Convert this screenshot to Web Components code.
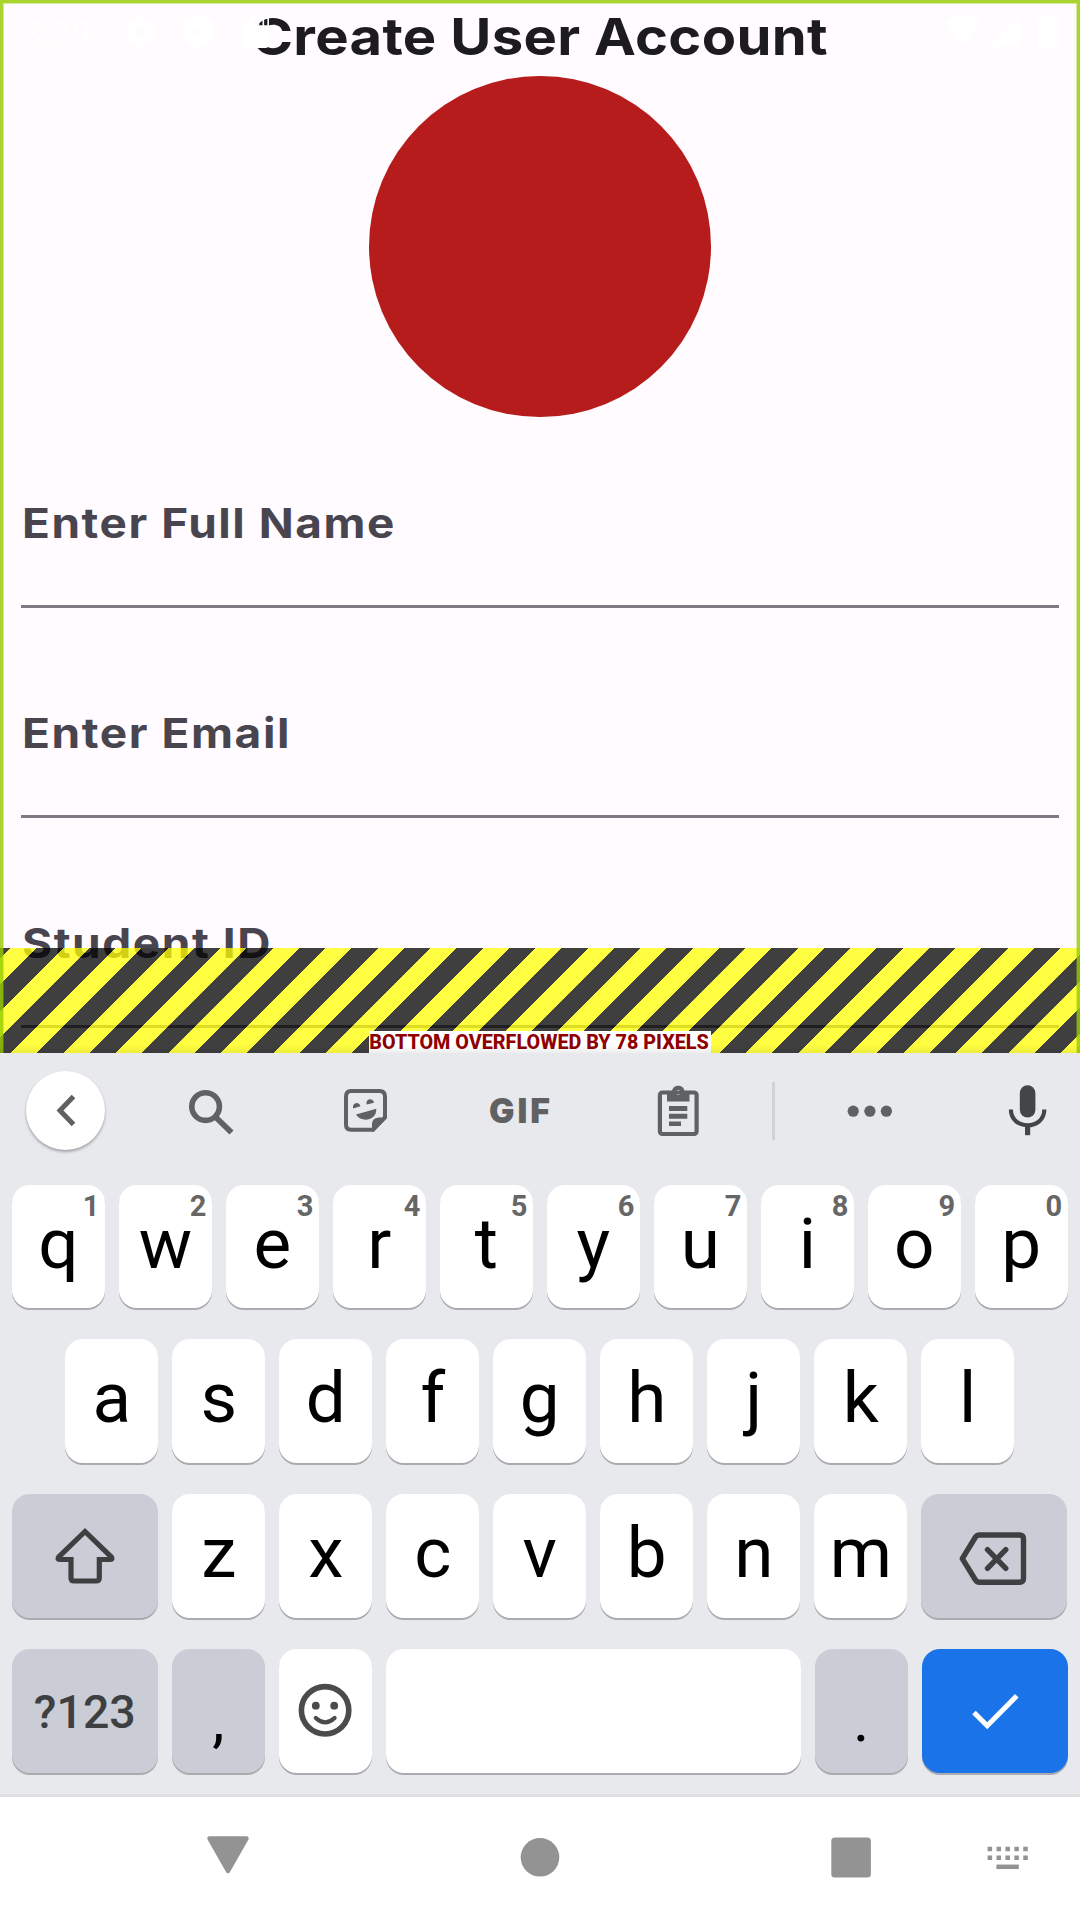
<!DOCTYPE html>
<html lang="en">
<head>
<meta charset="utf-8">
<title>Create User Account</title>
<style>
html,body{margin:0;padding:0}
body{width:1080px;height:1920px;overflow:hidden;background:#fff;font-family:Roboto,"Noto Sans",sans-serif}
</style>
</head>
<body>
<phone-screen>
  <account-form slot="app"></account-form>
  <soft-keyboard slot="keyboard"></soft-keyboard>
  <nav-bar slot="nav"></nav-bar>
</phone-screen>
<script>
function define(name, html) {
  customElements.define(name, class extends HTMLElement {
    connectedCallback() {
      if (this.shadowRoot) return;
      const root = this.attachShadow({mode: 'open'});
      root.innerHTML = typeof html === 'function' ? html(this) : html;
    }
  });
}

// Single line of text stretched to a given advance width.
define('fit-text', el => {
  const a = n => el.getAttribute(n);
  return `<style>:host{display:block}svg{display:block;overflow:visible;width:100%;height:100%}</style>
  <svg><text x="${a('x')}" y="${a('y')}" textLength="${a('length')}" lengthAdjust="spacingAndGlyphs" fill="currentColor">${a('text')}</text></svg>`;
});

define('status-bar', `<style>
:host{display:block;width:1080px;height:63px;color:#fff}svg{display:block}
text{font:400 36px Roboto,sans-serif}</style>
<svg width="1080" height="63" viewBox="0 0 1080 63" fill="#fff">
<text x="22" y="46">8:29</text>
<g transform="translate(121 12.5) scale(1.6)"><path fill-rule="evenodd" d="M19.1 12.9c0-.3.1-.6.1-.9s0-.6-.1-.9l2-1.6c.2-.1.2-.4.1-.6l-1.9-3.3c-.1-.2-.4-.3-.6-.2l-2.4 1c-.5-.4-1-.7-1.6-.9l-.4-2.6c0-.2-.2-.4-.5-.4h-3.8c-.2 0-.4.2-.5.4l-.3 2.6c-.6.2-1.100.6-1.600.9l-2.400-1c-.2-.1-.5 0-.6.2L2.700 8.900c-.1.2-.1.5.1.6l2 1.600c0 .3-.1.600-.1.900s0 .600.1.900l-2 1.600c-.2.1-.2.400-.1.600l1.900 3.300c.1.200.400.300.600.200l2.400-1c.500.400 1 .700 1.600.900l.400 2.600c0 .200.200.400.500.400h3.800c.200 0 .400-.200.500-.400l.300-2.600c.600-.200 1.100-.600 1.600-.900l2.400 1c.200.100.500 0 .600-.200l1.900-3.300c.100-.200.100-.500-.100-.600zM12 15.600a3.600 3.600 0 1 1 0-7.200 3.600 3.600 0 0 1 0 7.200z"/></g>
<path fill-rule="evenodd" d="M198 15l15 6v11c0 8-6 14-15 17-9-3-15-9-15-17V21zM193 26v12l11-6z"/>
<g transform="translate(236.500 12.250) scale(1.625)"><path fill-rule="evenodd" d="M18 2h-8L4 8v12c0 1.100.9 2 2 2h12c1.100 0 2-.9 2-2V4c0-1.100-.9-2-2-2zm-5 6h-2V4h2zm3 0h-2V4h2zm3 0h-2V4h2z"/></g>
<path d="M945 23q18-16 36 0L963 46zM989 46L1020 15V46zM1038 20q0-2 2-2h4v-3h9v3h4q2 0 2 2V46q0 2-2 2h-17q-2 0-2-2z"/>
</svg>`);

define('phone-screen', `<style>
:host{display:flex;flex-direction:column;position:relative;width:1080px;height:1920px;overflow:hidden}
status-bar{position:absolute;left:0;top:0;z-index:5}
</style><slot name="app"></slot><slot name="keyboard"></slot><slot name="nav"></slot><status-bar></status-bar>`);

define('form-field', el => `<style>
:host{display:flex;flex-direction:column;height:180px;color:#49454f}
fit-text{flex:1;font:700 41px Inter,"Open Sans",sans-serif;letter-spacing:1.400px}
i{display:block;height:2.6px;background:#7f7983}
</style><fit-text text="${el.getAttribute('label')}" x="${el.getAttribute('x')}" y="110.400" length="${el.getAttribute('length')}"></fit-text>
<i></i>`);

define('overflow-banner', `<style>
:host{display:flex;justify-content:center;align-items:flex-end;height:105.500px;
background:repeating-linear-gradient(135deg,rgba(0,0,0,.75) 0 7.570px,rgba(255,255,0,.75) 7.570px 26.160px,rgba(0,0,0,.75) 26.160px 37.120px)}
fit-text{width:342px;height:22.300px;background:#fff;color:#900000;font:800 20.700px Roboto,sans-serif}
</style><fit-text text="BOTTOM OVERFLOWED BY 78 PIXELS" x="0.300" y="18.300" length="339.500"></fit-text>`);

define('account-form', `<style>
:host{display:block;position:relative;height:1053px;overflow:hidden;background:#fffbff;flex:none}
.col{display:flex;flex-direction:column;padding:0 21px}
.title{height:75.900px;color:#1c1b1f;font:700 51.500px Inter,"Open Sans",sans-serif;letter-spacing:.300px}
.avatar{width:341.250px;height:341.250px;border-radius:50%;background:#b51c1b;align-self:center}
.fields{display:flex;flex-direction:column;gap:30px;padding-top:10.450px}
.edge{position:absolute;inset:0 0 -10px 0;border:3.500px solid rgba(150,204,0,.82);box-shadow:inset 0 0 0 .700px rgba(150,204,0,.5)}
overflow-banner{position:absolute;left:0;right:0;bottom:0}
.shade{position:absolute;left:0;right:0;bottom:0;height:8px;background:linear-gradient(rgba(0,0,0,0),rgba(0,0,0,.07))}
</style>
<div class="col"><fit-text class="title" text="Create User Account" x="230.500" y="55" length="576.500"></fit-text>
<div class="avatar"></div>
<div class="fields">
<form-field label="Enter Full Name" x="1" length="374"></form-field>
<form-field label="Enter Email" x="1" length="269"></form-field>
<form-field label="Student ID" x="1" length="250"></form-field>
</div></div>
<overflow-banner></overflow-banner><div class="edge"></div><div class="shade"></div>`);

define('key-cap', el => {
  const hint = el.getAttribute('hint');
  return `<style>
:host{display:flex;position:relative;flex:0 0 92.800px;height:123.700px;box-sizing:border-box;justify-content:center;align-items:flex-start;border-radius:18px;background:#fff;box-shadow:0 2px 0 #a9abae;color:#000;font:400 71px/117.600px Roboto,sans-serif}
:host([wide]){flex-basis:146px}
:host([space]){flex:1}
:host([tone=gray]){background:#cbcdd6}
:host([tone=blue]){background:#1a73e8}
:host([small]){font:500 46.500px/126px Roboto,sans-serif;color:#3e3f41}
:host([low]){font-size:62px;line-height:142px}
b{position:absolute;right:5.400px;top:0;font:700 29px/43px Roboto,sans-serif;color:#666}
::slotted(svg){align-self:center}
</style><slot></slot>${hint ? `<b>${hint}</b>` : ''}`;
});

define('key-row', `<style>:host{display:flex;justify-content:center;gap:14.200px;padding:0 12.200px 0 11.800px;height:123.700px}</style><slot></slot>`);

define('suggestion-bar', `<style>
:host{display:grid;grid-template-columns:131px 160px 149px 160px 156px 35px 158px 26px 105px;height:115.500px;align-items:center;justify-items:center}
svg{display:block}
.back{width:79px;height:79px;border-radius:50%;background:#fff;box-shadow:0 2px 3px rgba(0,0,0,.3);display:grid;place-items:center}
.bar{width:2.600px;height:58px;background:#d0d2d5}
.gif{width:64px;height:64px;color:#5f6163;font:900 33.500px Inter,sans-serif;letter-spacing:3px}
</style>
<div class="back"><svg width="40" height="40" viewBox="45.500 1091 40 40"><path d="M73 1096.500L59.500 1110.500L73 1124.500" fill="none" stroke="#5f6163" stroke-width="5"/></svg></div>
<svg width="64" height="64" viewBox="179 1079 64 64" fill="none" stroke="#5f6163"><circle cx="205.600" cy="1106.600" r="13.800" stroke-width="5.600"/><path d="M215.500 1117L231.500 1132.500" stroke-width="5.800"/></svg>
<svg width="64" height="64" viewBox="334 1079 64 64"><path d="M351 1091H379.500Q385 1091 385 1096.500V1117.500L373 1129.800H351Q346 1129.800 346 1124.500V1096.500Q346 1091 351 1091Z" fill="none" stroke="#5f6163" stroke-width="4"/><path fill="#5f6163" d="M387 1117.500H378.500Q372 1118 372 1124.500V1131.500H374ZM353.300 1108.500A3.800 3.800 0 1 1 360.500 1106.300ZM366.700 1104.500A3.800 3.800 0 1 1 374 1102.700ZM356 1114.500L376.300 1108.800C377 1121 361 1123 356 1114.500Z"/></svg>
<fit-text class="gif" text="GIF" x="1" y="43.500" length="64"></fit-text>
<svg width="64" height="64" viewBox="646 1079 64 64"><rect x="659.900" y="1092.500" width="36.700" height="41.500" rx="2.500" fill="none" stroke="#5f6163" stroke-width="4.200"/><path fill="#5f6163" fill-rule="evenodd" d="M667 1091H672C673 1084 683.500 1084 684.500 1091H689.500V1101.500H667ZM678.200 1090a2.500 2.500 0 1 0 .1 0ZM669 1106H687.300V1111H669ZM669 1113.700H687.300V1118.700H669ZM669 1121.500H681V1126H669Z"/></svg>
<div class="bar"></div>
<svg width="64" height="64" viewBox="838 1079 64 64" fill="#5f6163"><circle cx="853.200" cy="1111.200" r="5.600"/><circle cx="869.900" cy="1111.200" r="5.600"/><circle cx="886.400" cy="1111.200" r="5.600"/></svg><span></span>
<svg width="64" height="64" viewBox="996 1079 64 64"><rect x="1019.800" y="1085.300" width="15.600" height="32.200" rx="7.800" fill="#434547"/><path d="M1010.900 1109.500C1010.900 1130.500 1044.300 1130.500 1044.300 1109.500" fill="none" stroke="#434547" stroke-width="4.200"/><path d="M1025 1125h5.200v10.200h-5.200z" fill="#434547"/></svg>`);

const keys = (letters, hints = '') => [...letters].map((c, i) => `<key-cap${hints ? ` hint="${hints[i]}"` : ''}>${c}</key-cap>`).join('');

define('soft-keyboard', `<style>
:host{display:block;flex:none;height:744px;box-sizing:border-box;background:#e8e9ed;border-bottom:3px solid #dfe0e2}
.rows{display:flex;flex-direction:column;gap:31px;padding-top:16.300px}
</style>
<suggestion-bar></suggestion-bar>
<div class="rows">
<key-row>${keys('qwertyuiop', '1234567890')}</key-row>
<key-row>${keys('asdfghjkl')}</key-row>
<key-row><key-cap wide tone="gray"><svg width="80" height="80" viewBox="45 1516 80 80"><path d="M85 1531.500L58.800 1556.800Q56.500 1559.300 60 1559.500H71V1578Q71 1581 74 1581H96Q99.300 1581 99.300 1578V1559.500H110Q113.500 1559.300 111.200 1556.800Z" fill="none" stroke="#3e3f41" stroke-width="5.200"/></svg></key-cap>${keys('zxcvbnm')}<key-cap wide tone="gray"><svg width="80" height="80" viewBox="954.500 1516 80 80" fill="none" stroke="#3e3f41" stroke-width="5.400" stroke-linejoin="round" stroke-linecap="round"><path d="M980 1535H1020Q1024 1535 1024 1539V1578.500Q1024 1582.300 1020 1582.300H980Q977.500 1582.300 976 1580L962.800 1558.700L976 1537Q977.500 1535 980 1535ZM988 1549.700L1006.300 1568.300M1006.300 1549.700L988 1568.300"/></svg></key-cap></key-row>
<key-row><key-cap wide small tone="gray">?123</key-cap><key-cap low tone="gray">,</key-cap><key-cap><svg width="80" height="80" viewBox="285.400 1671 80 80"><circle cx="325.500" cy="1710.300" r="23.700" fill="none" stroke="#4b4b4b" stroke-width="5.600"/><circle cx="316.200" cy="1705.700" r="3.900" fill="#4b4b4b"/><circle cx="334.600" cy="1705.700" r="3.900" fill="#4b4b4b"/><path d="M316.200 1718Q325.500 1726.700 335 1718" fill="none" stroke="#4b4b4b" stroke-width="4.200" stroke-linecap="round"/></svg></key-cap><key-cap space></key-cap><key-cap low tone="gray">.</key-cap><key-cap wide tone="blue"><svg width="80" height="80" viewBox="954.500 1671 80 80"><path d="M973.500 1712.500L986.700 1725.700L1016.300 1695.800" fill="none" stroke="#fff" stroke-width="5"/></svg></key-cap></key-row>
</div>`);

define('nav-bar', `<style>
:host{display:grid;flex:1;background:#fff;grid-template-columns:456px 168px 454px;grid-template-columns:456px 168px 294px 162px;align-items:center;justify-items:center}
svg{display:block}.recent{margin-left:160px}.ime{margin-left:16px}</style>
<svg width="60" height="60" viewBox="198 1828.500 60 60"><path d="M209.500 1838H246.500L228 1870.500Z" fill="#939393" stroke="#939393" stroke-width="4.500" stroke-linejoin="round"/></svg>
<svg width="60" height="60" viewBox="510 1828.500 60 60"><circle cx="540" cy="1856.800" r="19.300" fill="#939393"/></svg>
<svg class="recent" width="60" height="60" viewBox="821 1828.500 60 60"><rect x="831.300" y="1837" width="39.600" height="40" rx="3.500" fill="#939393"/></svg>
<svg class="ime" width="60" height="60" viewBox="977 1828.500 60 60" fill="none" stroke="#939393" stroke-width="4.500"><path d="M987.600 1848.500H1028M987.600 1857.300H1028" stroke-dasharray="4.500 4.420"/><path d="M996.400 1866.300H1018.800"/></svg>`);
</script>
</body>
</html>
